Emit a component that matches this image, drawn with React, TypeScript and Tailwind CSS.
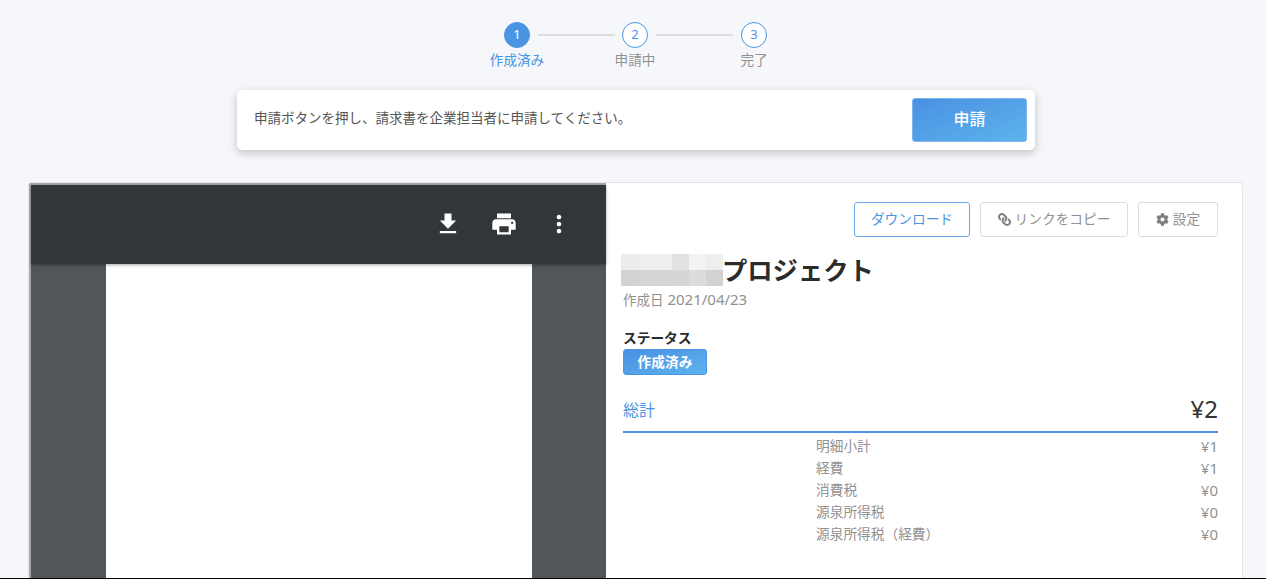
import { FaCog, FaLink } from 'react-icons/fa';

const steps = [
  { no: 1, label: '作成済み', active: true },
  { no: 2, label: '申請中', active: false },
  { no: 3, label: '完了', active: false },
];

const rows = [
  ['明細小計', '¥1'],
  ['経費', '¥1'],
  ['消費税', '¥0'],
  ['源泉所得税', '¥0'],
  ['源泉所得税（経費）', '¥0'],
];

const mosaic = [
  '#ececec', '#eeeeee', '#eeeeee', '#e2e2e2', '#f3f3f3', '#eeeeee',
  '#d2d2d2', '#d4d4d4', '#d4d4d4', '#d6d6d6', '#dcdcdc', '#d2d2d2',
];

const font = { fontFamily: '"Noto Sans", "Noto Sans CJK JP", sans-serif' };

function Stepper() {
  return (
    <div className="flex justify-center pl-[5px] pt-[22px]">
      {steps.map((s, i) => (
        <div key={s.no} className="flex items-start">
          {i > 0 && <div className={`ml-[8px] mt-[12px] h-[2px] w-[77px] bg-[#dcdcdc] ${i === 1 ? 'mr-[7px]' : 'mr-[8px]'}`} />}
          <div className="flex w-[26px] flex-col items-center">
            <div
              className={`flex h-[26px] w-[26px] shrink-0 items-center justify-center rounded-full border text-[13px] ${
                s.active ? 'border-[#4a94e4] bg-[#4a94e4] text-white' : 'border-[#4a94e4] bg-white text-[#4a94e4]'
              }`}
            >
              {s.no}
            </div>
            <div className={`mt-[2px] whitespace-nowrap text-[13.6px] leading-[20px] ${s.active ? 'text-[#4a94e4]' : 'text-[#919191]'}`}>
              {s.label}
            </div>
          </div>
        </div>
      ))}
    </div>
  );
}

function PdfViewer() {
  return (
    <div className="flex w-[577px] shrink-0 flex-col border-l-2 border-t-2 border-[#a9abab] bg-[#525659]">
      <div className="z-10 flex h-[79px] shrink-0 items-center justify-end gap-[27.5px] bg-[#323639] pb-[2px] pr-[33px] shadow-[0_1px_3px_rgba(0,0,0,0.35)]">
        <svg viewBox="0 0 24 24" className="h-[28px] w-[28px] fill-white">
          <path d="M19 9h-4V3H9v6H5l7 7 7-7zM5 18v2h14v-2H5z" />
        </svg>
        <svg viewBox="0 0 24 24" className="h-[28px] w-[28px] fill-white">
          <path d="M19 8H5c-1.66 0-3 1.34-3 3v6h4v4h12v-4h4v-6c0-1.66-1.34-3-3-3zm-3 11H8v-5h8v5zm3-7c-.55 0-1-.45-1-1s.45-1 1-1 1 .45 1 1-.45 1-1 1zm-1-9H6v4h12V3z" />
        </svg>
        <svg viewBox="0 0 24 24" className="h-[28px] w-[28px] fill-white">
          <path d="M12 8c1.1 0 2-.9 2-2s-.9-2-2-2-2 .9-2 2 .9 2 2 2zm0 2c-1.1 0-2 .9-2 2s.9 2 2 2 2-.9 2-2-.9-2-2-2zm0 6c-1.1 0-2 .9-2 2s.9 2 2 2 2-.9 2-2-.9-2-2-2z" />
        </svg>
      </div>
      <div className="ml-[75px] w-[426px] flex-1 bg-white" />
    </div>
  );
}

function Detail() {
  return (
    <div className="flex-1 pl-[17px] pr-[24px] pt-[19px]">
      <div className="flex justify-end gap-[10px] text-[13.7px]">
        <button className="h-[35px] w-[116px] rounded-[3px] border border-[#6aa8ea] bg-white text-[#4a94e4]">ダウンロード</button>
        <button className="flex h-[35px] w-[148px] items-center justify-center gap-[4px] rounded-[3px] border border-[#dddddd] bg-white text-[#919191]">
          <FaLink size={13} className="-scale-x-100 text-[#7f7f7f]" />
          リンクをコピー
        </button>
        <button className="flex h-[35px] w-[80px] items-center justify-center gap-[4px] rounded-[3px] border border-[#dddddd] bg-white text-[#919191]">
          <FaCog size={13} className="text-[#7f7f7f]" />
          設定
        </button>
      </div>

      <div className="ml-[-2px] mt-[17px] flex h-[32px] items-center">
        <div className="grid w-[102px] shrink-0 grid-cols-6">
          {mosaic.map((c, i) => (
            <div key={i} className="h-[16px]" style={{ background: c }} />
          ))}
        </div>
        <h1 className="ml-[-1px] text-[25.3px] font-bold leading-[32px] text-[#2b2b2b]">プロジェクト</h1>
      </div>
      <div className="mt-[3px] text-[15px] leading-[20px] text-[#919191]">
        <span className="text-[13.5px]">作成日</span> 2021/04/23
      </div>

      <div className="mt-[18px] text-[13.7px] font-bold leading-[20px] text-[#2b2b2b]">ステータス</div>
      <div className="mt-[1px] flex h-[26px] w-[84px] items-center justify-center rounded-[3px] border border-[#4a94e4] bg-gradient-to-br from-[#4a90e2] to-[#5db3ec] text-[13.7px] font-bold text-white">
        作成済み
      </div>

      <div className="mt-[16px] flex h-[42px] items-center justify-between border-b-2 border-[#4a94e4] pb-[2px]">
        <span className="text-[16px] text-[#4a94e4]">総計</span>
        <span className="mb-[3px] text-[24px] leading-[32px] text-[#333333]">¥2</span>
      </div>
      <div className="mt-[2px]">
        {rows.map(([k, v]) => (
          <div key={k} className="flex h-[22px] items-center justify-between pl-[193px] text-[13.7px] text-[#919191]">
            <span>{k}</span>
            <span className="text-[15px]">{v}</span>
          </div>
        ))}
      </div>
    </div>
  );
}

export default function App() {
  return (
    <div className="flex h-[581px] w-full flex-col overflow-hidden bg-white" style={font}>
      <div className="flex h-[578px] shrink-0 flex-col bg-[#f5f7fb]">
        <Stepper />
        <div className="ml-[237px] mt-[20px] flex h-[60px] w-[798px] shrink-0 items-center justify-between rounded-[5px] bg-white pl-[17px] pr-[8px] shadow-[0_3px_10px_rgba(0,0,0,0.22)]">
          <span className="pb-[3px] text-[13.5px] text-[#555555]">申請ボタンを押し、請求書を企業担当者に申請してください。</span>
          <button className="h-[44px] w-[115px] rounded-[3px] border border-[#7db5ee] bg-gradient-to-br from-[#4a90e2] to-[#5db3ec] pb-[3px] text-[16px] font-medium text-white">
            申請
          </button>
        </div>
        <div className="ml-[28px] mt-[32px] flex min-h-0 w-[1215px] flex-1 overflow-hidden rounded-t-[4px] border-x border-t border-[#e4e6ea] bg-white">
          <PdfViewer />
          <Detail />
        </div>
      </div>
      <div className="h-px shrink-0 bg-black" />
    </div>
  );
}
